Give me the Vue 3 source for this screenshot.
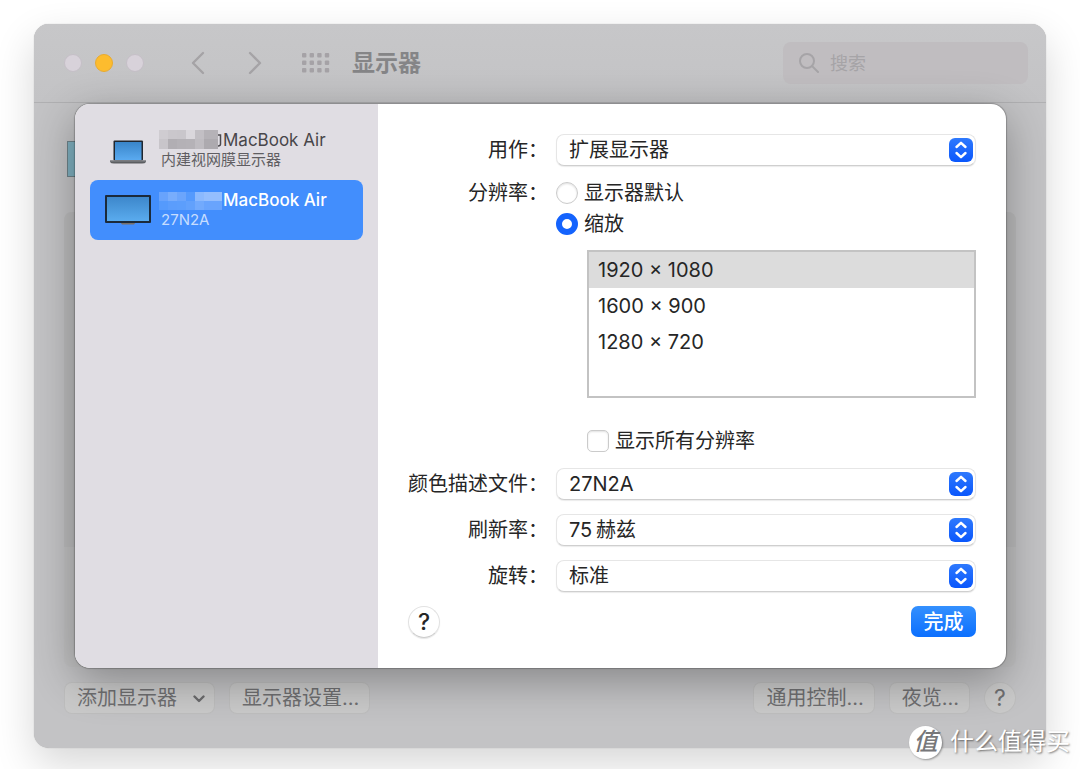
<script setup>
import { ref } from 'vue'

const displays = [
  { id: 'builtin', kind: 'laptop', name: 'MacBook Air', detail: '内建视网膜显示器' },
  { id: 'external', kind: 'monitor', name: 'MacBook Air', detail: '27N2A' },
]
const selected = ref('external')

const mosaics = {
  laptop: [
    '#cfccd1', '#cac7cc', '#c9c6cb', '#dad7dc', '#c2bfc4', '#b5b2b7',
    '#c8c5ca', '#b1aeb3', '#b4b1b6', '#b5b2b7', '#bfbcc1', '#adaaaf',
  ],
  monitor: [
    '#68a3fc', '#78adfc', '#6ba5fc', '#559afd', '#8bb9fe', '#94befe',
    '#559afc', '#5b9dfc', '#5c9efc', '#62a1fc', '#72aafd', '#69a4fd',
  ],
}

const useAs = ref('扩展显示器')
const mode = ref('scaled')
const resolutions = ['1920 × 1080', '1600 × 900', '1280 × 720']
const resolution = ref(resolutions[0])
const showAll = ref(false)
const extra = ref([
  { id: 'profile', label: '颜色描述文件：', value: '27N2A' },
  { id: 'refresh', label: '刷新率：', value: '75\u2009赫兹' },
  { id: 'rotation', label: '旋转：', value: '标准' },
])
</script>

<template>
  <div class="page">
    <div class="window">
      <header class="toolbar">
        <div class="lights">
          <button class="light" aria-label="关闭"></button>
          <button class="light amber" aria-label="最小化"></button>
          <button class="light" aria-label="缩放窗口"></button>
        </div>
        <nav class="nav">
          <button class="plain" aria-label="后退">
            <svg width="14" height="24" viewBox="0 0 14 24"><path d="M12 2 2 12l10 10" /></svg>
          </button>
          <button class="plain" aria-label="前进">
            <svg width="14" height="24" viewBox="0 0 14 24"><path d="M2 2l10 10L2 22" /></svg>
          </button>
        </nav>
        <button class="plain" aria-label="显示全部">
          <svg class="dots" width="28" height="20" viewBox="0 0 28 20">
            <template v-for="r in 3" :key="r">
              <rect v-for="c in 4" :key="c" :x="(c - 1) * 7.6" :y="(r - 1) * 7.5" width="4.4" height="4.4" rx="1" />
            </template>
          </svg>
        </button>
        <h1>显示器</h1>
        <label class="search">
          <svg width="20" height="20" viewBox="0 0 20 20"><circle cx="8" cy="8" r="7" /><path d="M13 13l6 6" /></svg>
          <input type="search" placeholder="搜索" aria-label="搜索" />
        </label>
      </header>

      <main class="backdrop">
        <div class="thumb"></div>
        <div class="group"><div class="group-top"></div></div>
      </main>

      <footer class="actions">
        <button class="push">添加显示器
          <svg width="12" height="8" viewBox="0 0 12 8"><path d="M1.5 1.5 6 6l4.500-4.500" /></svg>
        </button>
        <button class="push">显示器设置…</button>
        <span class="spacer"></span>
        <button class="push">通用控制…</button>
        <button class="push">夜览…</button>
        <button class="push help" aria-label="帮助">?</button>
      </footer>

      <section class="dialog" role="dialog" aria-label="显示器设置">
        <aside class="sidebar">
          <button
            v-for="d in displays"
            :key="d.id"
            class="device"
            :class="{ active: selected === d.id }"
            @click="selected = d.id"
          >
            <span class="device-icon">
              <svg v-if="d.kind === 'laptop'" width="36" height="28" viewBox="0 0 36 28">
                <defs>
                  <linearGradient id="lap" x1="0" y1="0" x2="0" y2="1">
                    <stop offset="0" stop-color="#3985c9" /><stop offset="1" stop-color="#5aaaf0" />
                  </linearGradient>
                </defs>
                <rect x="3.500" y="4.500" width="29.500" height="20" rx="1" fill="#20262e" />
                <rect x="5" y="6" width="26.500" height="18" fill="url(#lap)" />
                <path d="M0 24.500h36v1.500q-1 1.500-4 1.500H4q-3 0-4-1.500z" fill="#5c5e62" />
                <path d="M0 24.500h36v1H0z" fill="#85878b" />
              </svg>
              <svg v-else width="46" height="30" viewBox="0 0 46 30">
                <defs>
                  <linearGradient id="mon" x1="0" y1="0" x2="0" y2="1">
                    <stop offset="0" stop-color="#3d87cb" /><stop offset="1" stop-color="#5aabee" />
                  </linearGradient>
                </defs>
                <path d="M15 27h16l-2 2.500H17z" fill="#77716c" />
                <rect width="46" height="28" rx="1" fill="#1b2a3b" />
                <rect x="2" y="2" width="42" height="24" fill="url(#mon)" />
              </svg>
            </span>
            <span class="device-text">
              <span class="device-name">
                <svg width="64" height="20" viewBox="0 0 64 20" aria-hidden="true">
                  <g v-if="d.kind === 'laptop'">
                    <path d="M57 5h4.500v9q0 2-2.500 2" fill="none" stroke="#4b494d" stroke-width="1.500" />
                    <rect
                      v-for="(c, i) in mosaics.laptop" :key="i" :fill="c"
                      :x="[0, 9, 18, 27, 36, 45][i % 6]" :y="i < 6 ? 0 : 9"
                      :width="i % 6 === 5 ? 14 : 9" :height="i < 6 ? 9 : 10"
                    />
                  </g>
                  <g v-else>
                    <rect
                      v-for="(c, i) in mosaics.monitor" :key="i" :fill="c"
                      :x="[0, 9, 18, 27, 36, 45][i % 6]" :y="i < 6 ? 2 : 11"
                      :width="i % 6 === 5 ? 18 : 9" height="9"
                    />
                  </g>
                </svg>
                {{ d.name }}
              </span>
              <span class="device-detail">{{ d.detail }}</span>
            </span>
          </button>
        </aside>

        <form class="settings" @submit.prevent>
          <div class="grid">
            <label class="caption" for="use-as">用作：</label>
            <div class="popup">
              <select id="use-as" v-model="useAs"><option>扩展显示器</option></select>
              <svg class="stepper" width="24" height="24" viewBox="0 0 24 24"><path d="M7.500 9 12 4.800 16.500 9M7.500 15l4.500 4.200 4.500-4.200" /></svg>
            </div>

            <span id="res-label" class="caption">分辨率：</span>
            <div role="radiogroup" aria-labelledby="res-label">
              <label class="choice"><input v-model="mode" type="radio" name="mode" value="default" />显示器默认</label>
              <label class="choice"><input v-model="mode" type="radio" name="mode" value="scaled" />缩放</label>
              <select v-model="resolution" class="list" size="4" aria-label="缩放分辨率">
                <option v-for="r in resolutions" :key="r" :value="r">{{ r }}</option>
              </select>
              <label class="choice all"><input v-model="showAll" type="checkbox" />显示所有分辨率</label>
            </div>
          </div>

          <div class="grid extras">
            <template v-for="row in extra" :key="row.id">
              <label class="caption" :for="row.id">{{ row.label }}</label>
              <div class="popup">
                <select :id="row.id" v-model="row.value"><option>{{ row.value }}</option></select>
                <svg class="stepper" width="24" height="24" viewBox="0 0 24 24"><path d="M7.500 9 12 4.800 16.500 9M7.500 15l4.500 4.200 4.500-4.200" /></svg>
              </div>
            </template>
          </div>

          <div class="bottom">
            <button type="button" class="help-light" aria-label="帮助">?</button>
            <button type="submit" class="done">完成</button>
          </div>
        </form>
      </section>
    </div>

    <div class="watermark"><span class="seal">值</span><span>什么值得买</span></div>
  </div>
</template>

<style>
body {
  background: #fff;
}
</style>

<style scoped>
* {
  box-sizing: border-box;
}
.page {
  position: relative;
  display: flex;
  min-height: 100vh;
  padding: 24px 34px 21px;
  overflow: hidden;
  font-family: Inter, "Noto Sans CJK SC", sans-serif;
  font-size: 20px;
  line-height: 30px;
  color: #262626;
}
button,
input,
select {
  font: inherit;
  color: inherit;
  margin: 0;
}
button {
  border: 0;
  padding: 0;
  background: none;
}
.window {
  position: relative;
  flex: 1;
  display: flex;
  flex-direction: column;
  min-width: 0;
  border-radius: 15px;
  background: #c3c3c5;
  box-shadow: 0 0 1px rgba(0, 0, 0, 0.3), 0 16px 40px rgba(0, 0, 0, 0.16);
}
.toolbar {
  display: flex;
  align-items: center;
  height: 79px;
  padding: 0 18px 0 30px;
  border-bottom: 1px solid #b0b0b2;
  border-radius: 15px 15px 0 0;
  background: linear-gradient(#c7c7c9, #c3c3c5);
}
.lights {
  display: flex;
  gap: 13px;
}
.light {
  width: 18px;
  height: 18px;
  border: 1px solid #c5bfc7;
  border-radius: 50%;
  background: #d8d2da;
}
.amber {
  border-color: #e9ab2f;
  background: #fdbc2e;
}
.nav {
  display: flex;
  gap: 43px;
  margin: 0 40px 0 47px;
}
.plain {
  display: flex;
}
.plain svg {
  fill: none;
  stroke: #a5a3a6;
  stroke-width: 2.4;
  stroke-linecap: round;
  stroke-linejoin: round;
}
.plain .dots {
  fill: #a5a2a6;
  stroke: none;
}
h1 {
  margin: 0 auto 0 22px;
  font-size: 23px;
  line-height: 30px;
  font-weight: 700;
  color: #858587;
}
.search {
  display: flex;
  align-items: center;
  gap: 11px;
  width: 245px;
  height: 42px;
  padding: 0 16px;
  border-radius: 8px;
  background: #c0bdc0;
}
.search svg {
  flex: none;
  fill: none;
  stroke: #a6a4a7;
  stroke-width: 2;
  stroke-linecap: round;
}
.search input {
  width: 100%;
  min-width: 0;
  padding: 2px 0 0;
  border: 0;
  outline: 0;
  background: none;
  font-size: 18px;
}
.search input::placeholder {
  color: #a6a4a7;
}
.backdrop {
  flex: 1;
  display: flex;
  flex-direction: column;
  padding: 38px 30px 0;
}
.thumb {
  width: 58px;
  height: 36px;
  margin-left: 3px;
  border: 1px solid #6d8289;
  background: #7fb0c0;
}
.group {
  flex: 1;
  margin-top: 35px;
  border-radius: 8px;
  background: #c0c0c1;
}
.group-top {
  height: 335px;
  border-radius: 8px 8px 0 0;
  background: #bbbbbc;
}
.actions {
  display: flex;
  gap: 14px;
  padding: 15px 30px 34px;
}
.spacer {
  flex: 1;
}
.push {
  display: flex;
  align-items: center;
  height: 32px;
  padding: 0 10px 0 12px;
  border: 1px solid rgba(0, 0, 0, 0.06);
  border-radius: 8px;
  background: #cacaca;
  color: #6f6f71;
}
.push svg {
  margin: 2px -1px 0 16px;
  fill: none;
  stroke: #6b6b6d;
  stroke-width: 2.4;
  stroke-linecap: round;
  stroke-linejoin: round;
}
.help {
  justify-content: center;
  width: 32px;
  padding: 0;
  border-radius: 50%;
  font-size: 23px;
}
.dialog {
  position: absolute;
  top: 80px;
  left: 41px;
  right: 40px;
  display: flex;
  overflow: hidden;
  border-radius: 15px;
  background: #fff;
  box-shadow: 0 0 1px 1px rgba(0, 0, 0, 0.22), 0 12px 44px rgba(0, 0, 0, 0.32);
}
.sidebar {
  flex: none;
  width: 303px;
  padding: 16px 15px;
  background: #e0dde3;
}
.device {
  display: flex;
  align-items: center;
  gap: 8px;
  width: 100%;
  height: 60px;
  padding: 0 15px;
  border-radius: 8px;
  text-align: left;
  color: #48464a;
}
.device-icon {
  display: flex;
  justify-content: center;
  width: 46px;
}
.device-text {
  display: flex;
  flex-direction: column;
  line-height: 20px;
}
.device-name {
  display: flex;
  font-size: 17px;
}
.device-detail {
  padding-left: 2px;
  font-size: 15px;
  color: #5f5d62;
}
.active {
  background: #428efd;
  color: #fff;
}
.active .device-name {
  font-weight: 500;
}
.active .device-detail {
  color: #c6ddff;
}
.settings {
  flex: 1;
  min-width: 0;
  padding: 30px;
}
.grid {
  display: grid;
  grid-template-columns: 140px 1fr;
  column-gap: 8px;
  row-gap: 11px;
}
.extras {
  margin-top: 12px;
  row-gap: 14px;
}
.caption {
  text-align: right;
  line-height: 32px;
  white-space: nowrap;
}
.popup {
  position: relative;
}
.popup select {
  display: block;
  width: 100%;
  height: 32px;
  padding: 0 40px 2px 12px;
  border: 1px solid #e6e6e6;
  border-bottom-color: #cfcfcf;
  border-radius: 8px;
  background: #fff;
  box-shadow: 0 1px 1px rgba(0, 0, 0, 0.08);
  appearance: none;
}
.stepper {
  position: absolute;
  top: 4px;
  right: 3px;
  border-radius: 6px;
  background: linear-gradient(#2e79fd, #0a57fc);
  fill: none;
  stroke: #fff;
  stroke-width: 2.4;
  stroke-linecap: round;
  stroke-linejoin: round;
  pointer-events: none;
}
.choice {
  display: flex;
  align-items: center;
  gap: 6px;
  height: 31px;
}
.choice input {
  width: 22px;
  height: 22px;
  border: 1px solid #cbcbcb;
  border-radius: 50%;
  background: #fff;
  box-shadow: inset 0 1px 2px rgba(0, 0, 0, 0.12);
  appearance: none;
}
.choice input[type="checkbox"] {
  border-radius: 5px;
}
.choice input[type="radio"]:checked {
  border: 6px solid #1463fd;
  box-shadow: none;
}
.list {
  display: block;
  width: calc(100% - 31px);
  height: 148px;
  margin: 11px 0 28px 31px;
  padding: 0;
  border: 2px solid #c3c3c3;
  border-radius: 0;
  outline: 0;
  overflow: hidden;
  background: #fff;
}
.list option {
  height: 36px;
  min-height: 36px;
  padding: 6px 9px 0;
  color: #262626;
}
.list option:checked {
  background: #dcdcdc linear-gradient(#dcdcdc, #dcdcdc);
}
.all {
  margin-left: 31px;
  height: 30px;
}
.bottom {
  display: flex;
  justify-content: space-between;
  margin-top: 14px;
}
.help-light {
  width: 32px;
  height: 32px;
  border: 1px solid #e2e2e2;
  border-bottom-color: #cdcdcd;
  border-radius: 50%;
  box-shadow: 0 1px 1px rgba(0, 0, 0, 0.1);
  font-size: 23px;
  font-weight: 500;
}
.done {
  width: 65px;
  height: 31px;
  border-radius: 7px;
  background: linear-gradient(#3490fe, #0b6ffe);
  color: #fff;
  font-weight: 500;
}
.watermark {
  position: absolute;
  right: 10px;
  bottom: 10px;
  display: flex;
  align-items: center;
  gap: 8px;
  height: 34px;
  font-size: 24px;
  color: #fff;
  text-shadow: 1px 1px 2px rgba(0, 0, 0, 0.5);
}
.seal {
  display: flex;
  align-items: center;
  justify-content: center;
  width: 33px;
  height: 33px;
  border-radius: 50%;
  background: #fff;
  box-shadow: 1px 1px 2px rgba(0, 0, 0, 0.35);
  color: #77777a;
  font-style: italic;
  font-weight: 500;
  text-shadow: none;
}
</style>
